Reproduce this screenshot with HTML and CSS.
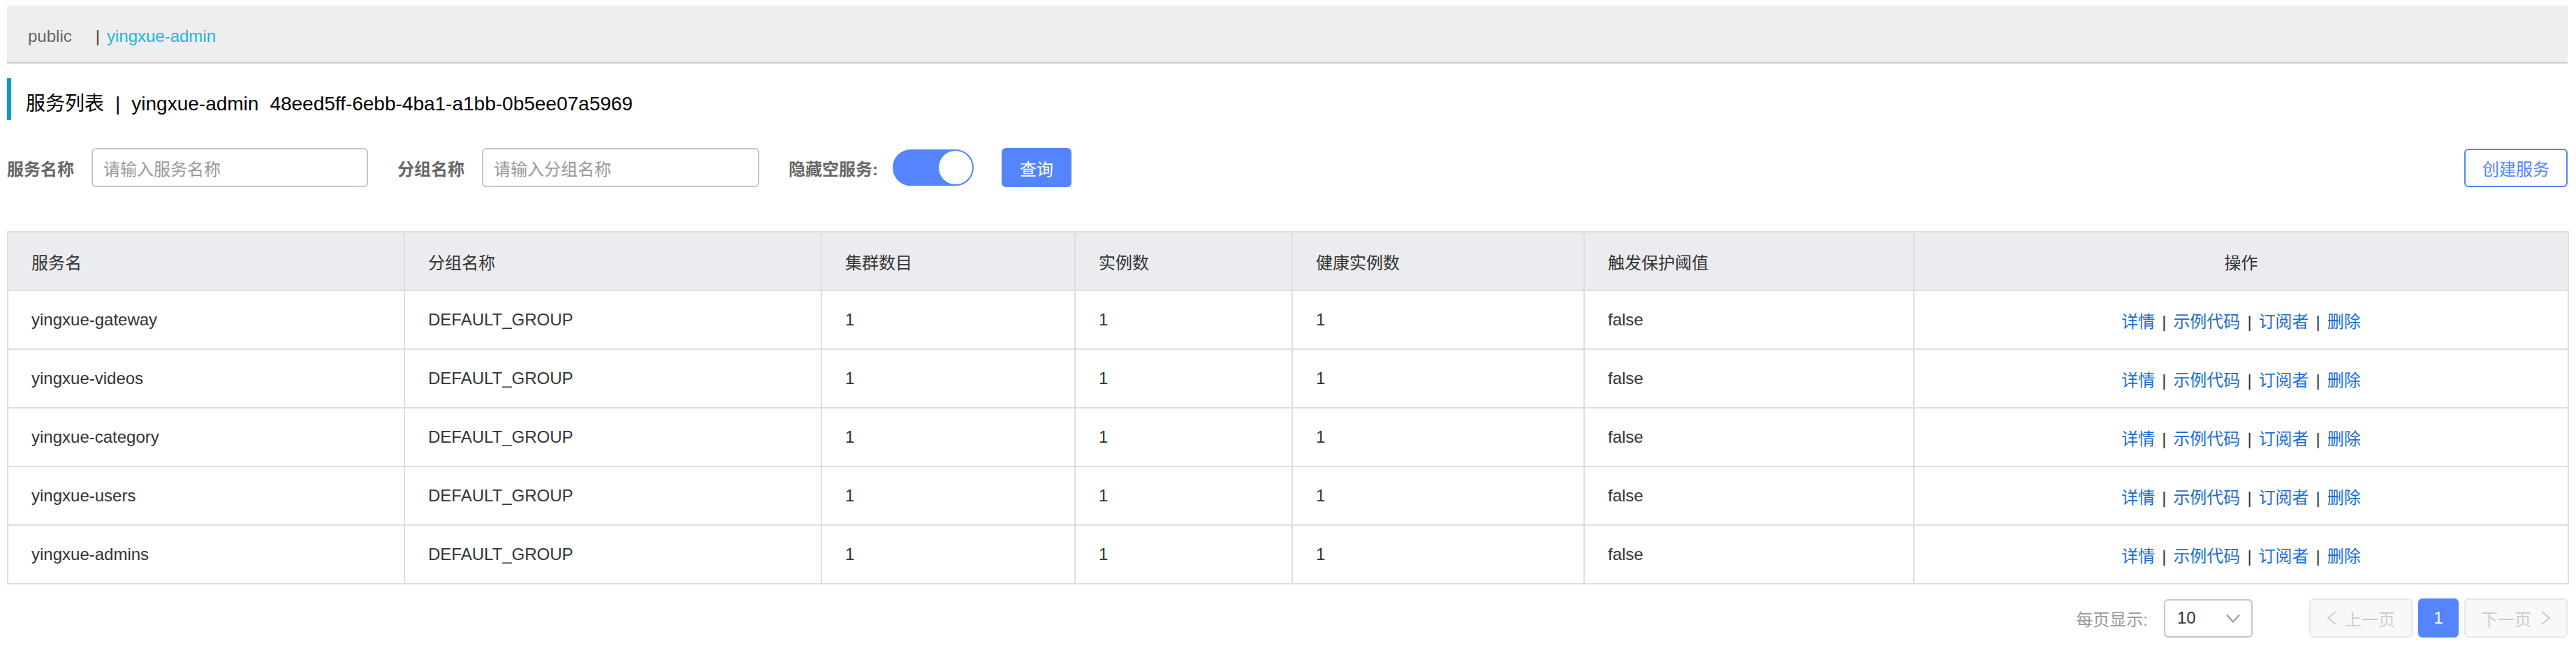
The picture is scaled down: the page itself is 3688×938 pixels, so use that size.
FILE: index.html
```html
<!DOCTYPE html>
<html lang="zh-CN">
<head>
<meta charset="utf-8">
<title>服务列表</title>
<link rel="stylesheet" href="styles.css">
</head>
<body>
<div class="page">
  <div class="ns-bar">
    <span class="ns-item">public</span>
    <span class="ns-sep">|</span>
    <span class="ns-item ns-active">yingxue-admin</span>
  </div>

  <div class="page-title">
    <span class="title-item">服务列表</span>
    <span class="title-item">|</span>
    <span class="title-item">yingxue-admin</span>
    <span class="title-item">48eed5ff-6ebb-4ba1-a1bb-0b5ee07a5969</span>
  </div>

  <div class="filter">
    <div class="form-item">
      <label class="form-label">服务名称</label>
      <div class="input"><span class="placeholder">请输入服务名称</span></div>
    </div>
    <div class="form-item">
      <label class="form-label">分组名称</label>
      <div class="input input-wide"><span class="placeholder">请输入分组名称</span></div>
    </div>
    <div class="form-item">
      <label class="form-label form-label-tight">隐藏空服务:</label>
      <div class="switch"><span class="knob"></span></div>
    </div>
    <div class="form-item">
      <button class="btn btn-primary">查询</button>
    </div>
    <div class="spacer"></div>
    <button class="btn btn-outline">创建服务</button>
  </div>

  <table class="grid">
    <colgroup>
      <col class="c1"><col class="c2"><col class="c3"><col class="c4"><col class="c5"><col class="c6"><col class="c7">
    </colgroup>
    <thead>
      <tr>
        <th>服务名</th>
        <th>分组名称</th>
        <th>集群数目</th>
        <th>实例数</th>
        <th>健康实例数</th>
        <th>触发保护阈值</th>
        <th class="center">操作</th>
      </tr>
    </thead>
    <tbody>
      <tr>
        <td>yingxue-gateway</td><td>DEFAULT_GROUP</td><td>1</td><td>1</td><td>1</td><td>false</td>
        <td class="center"><a class="op">详情</a><span class="op-sep">|</span><a class="op">示例代码</a><span class="op-sep">|</span><a class="op">订阅者</a><span class="op-sep">|</span><a class="op">删除</a></td>
      </tr>
      <tr>
        <td>yingxue-videos</td><td>DEFAULT_GROUP</td><td>1</td><td>1</td><td>1</td><td>false</td>
        <td class="center"><a class="op">详情</a><span class="op-sep">|</span><a class="op">示例代码</a><span class="op-sep">|</span><a class="op">订阅者</a><span class="op-sep">|</span><a class="op">删除</a></td>
      </tr>
      <tr>
        <td>yingxue-category</td><td>DEFAULT_GROUP</td><td>1</td><td>1</td><td>1</td><td>false</td>
        <td class="center"><a class="op">详情</a><span class="op-sep">|</span><a class="op">示例代码</a><span class="op-sep">|</span><a class="op">订阅者</a><span class="op-sep">|</span><a class="op">删除</a></td>
      </tr>
      <tr>
        <td>yingxue-users</td><td>DEFAULT_GROUP</td><td>1</td><td>1</td><td>1</td><td>false</td>
        <td class="center"><a class="op">详情</a><span class="op-sep">|</span><a class="op">示例代码</a><span class="op-sep">|</span><a class="op">订阅者</a><span class="op-sep">|</span><a class="op">删除</a></td>
      </tr>
      <tr>
        <td>yingxue-admins</td><td>DEFAULT_GROUP</td><td>1</td><td>1</td><td>1</td><td>false</td>
        <td class="center"><a class="op">详情</a><span class="op-sep">|</span><a class="op">示例代码</a><span class="op-sep">|</span><a class="op">订阅者</a><span class="op-sep">|</span><a class="op">删除</a></td>
      </tr>
    </tbody>
  </table>

  <div class="pager">
    <span class="pager-label">每页显示:</span>
    <div class="select">
      <span class="select-value">10</span>
      <svg class="select-arrow" width="20" height="13" viewBox="0 0 20 13"><polyline points="1,1.5 10,11.5 19,1.5" fill="none" stroke="#999" stroke-width="2"/></svg>
    </div>
    <button class="page-btn page-disabled page-prev">
      <svg width="14" height="20" viewBox="0 0 14 20"><polyline points="13,1 2,10 13,19" fill="none" stroke="#ccc" stroke-width="2"/></svg>
      <span>上一页</span>
    </button>
    <button class="page-btn page-current">1</button>
    <button class="page-btn page-disabled page-next">
      <span>下一页</span>
      <svg width="14" height="20" viewBox="0 0 14 20"><polyline points="1,1 12,10 1,19" fill="none" stroke="#ccc" stroke-width="2"/></svg>
    </button>
  </div>
</div>
</body>
</html>
```
FILE: styles.css
```css
* { box-sizing: border-box; }

body {
  margin: 0;
  background: #ffffff;
  font-family: "Liberation Sans", "Noto Sans CJK SC", sans-serif;
  font-size: 24px;
  color: #333333;
}

.page {
  padding: 8px 12px 0 10px;
}

/* namespace bar */
.ns-bar {
  height: 83px;
  background: #eeeeee;
  border-bottom: 2px solid #cccccc;
  padding: 26px 0 0 30px;
  line-height: 36px;
  display: flex;
  align-items: flex-start;
  font-size: 24px;
}
.ns-item { color: #666666; }
.ns-sep { color: #444444; margin: 0 10px 0 34px; }
.ns-active { color: #1db5dc; }

/* title */
.page-title {
  margin-top: 21px;
  height: 60px;
  border-left: 6px solid #0a9bcd;
  padding: 15px 0 0 21px;
  line-height: 44px;
  white-space: nowrap;
  display: flex;
}
.title-item {
  font-size: 28px;
  color: #000000;
  margin-right: 16px;
}

/* filter row */
.filter {
  margin-top: 40px;
  height: 56px;
  display: flex;
  align-items: center;
}
.form-item {
  display: flex;
  align-items: center;
  margin-right: 42px;
}
.form-label {
  font-weight: bold;
  color: #666666;
  font-size: 24px;
  margin-right: 25px;
}
.form-label-tight { margin-right: 21px; }
.input {
  width: 396px;
  height: 56px;
  border: 2px solid #c4c6cf;
  border-radius: 6px;
  padding-left: 15px;
  display: flex;
  align-items: center;
}
.input-wide { width: 397px; }
.placeholder { color: #999999; font-size: 24px; }

.switch {
  width: 116px;
  height: 52px;
  border-radius: 26px;
  background: #5584ff;
  border: 2px solid #5584ff;
  display: flex;
  justify-content: flex-end;
  align-items: center;
}
.knob {
  width: 48px;
  height: 48px;
  border-radius: 50%;
  background: #ffffff;
}

.btn {
  height: 56px;
  border-radius: 6px;
  font-family: inherit;
  font-size: 24px;
  padding: 0;
  cursor: pointer;
}
.btn-primary {
  width: 100px;
  background: #5584ff;
  border: 2px solid #5584ff;
  color: #ffffff;
  margin-left: -2px;
}
.spacer { flex: 1; }
.btn-outline {
  width: 148px;
  height: 55px;
  background: #ffffff;
  border: 2px solid #5584ff;
  color: #5584ff;
}

/* table */
.grid {
  margin-top: 63px;
  width: 3666px;
  border-collapse: collapse;
  table-layout: fixed;
}
.c1 { width: 568px; }
.c2 { width: 597px; }
.c3 { width: 363px; }
.c4 { width: 311px; }
.c5 { width: 418px; }
.c6 { width: 472px; }
.c7 { width: 937px; }

.grid tr { height: 84px; }
.grid th,
.grid td {
  border: 2px solid #dcdee3;
  padding: 0 0 0 33px;
  text-align: left;
  font-size: 24px;
  font-weight: normal;
  color: #333333;
  white-space: nowrap;
}
.grid th { background: #ebecf0; }
.grid .center { text-align: center; padding: 0; }

.op { color: #1a6dd0; text-decoration: none; cursor: pointer; }
.op-sep { color: #333333; margin: 0 10px; }

/* pager */
.pager {
  margin-top: 20px;
  height: 56px;
  display: flex;
  justify-content: flex-end;
  align-items: center;
}
.pager-label { color: #999999; font-size: 24px; margin-right: 23px; }
.select {
  width: 127px;
  height: 55px;
  border: 2px solid #c4c6cf;
  border-radius: 6px;
  display: flex;
  align-items: center;
  padding: 0 16px 0 17px;
  margin-right: 81px;
}
.select-value { color: #333333; font-size: 24px; flex: 1; }
.select-arrow { display: block; }

.page-btn {
  height: 56px;
  border-radius: 6px;
  font-family: inherit;
  font-size: 24px;
  padding: 0;
  display: flex;
  align-items: center;
  justify-content: center;
}
.page-disabled {
  width: 148px;
  background: #f7f8fa;
  border: 2px solid #e6e7eb;
  color: #cccccc;
}
.page-prev svg { margin-right: 12px; }
.page-next svg { margin-left: 14px; }
.page-current {
  width: 58px;
  margin: 0 8px;
  background: #5584ff;
  border: 2px solid #5584ff;
  color: #ffffff;
}
```
